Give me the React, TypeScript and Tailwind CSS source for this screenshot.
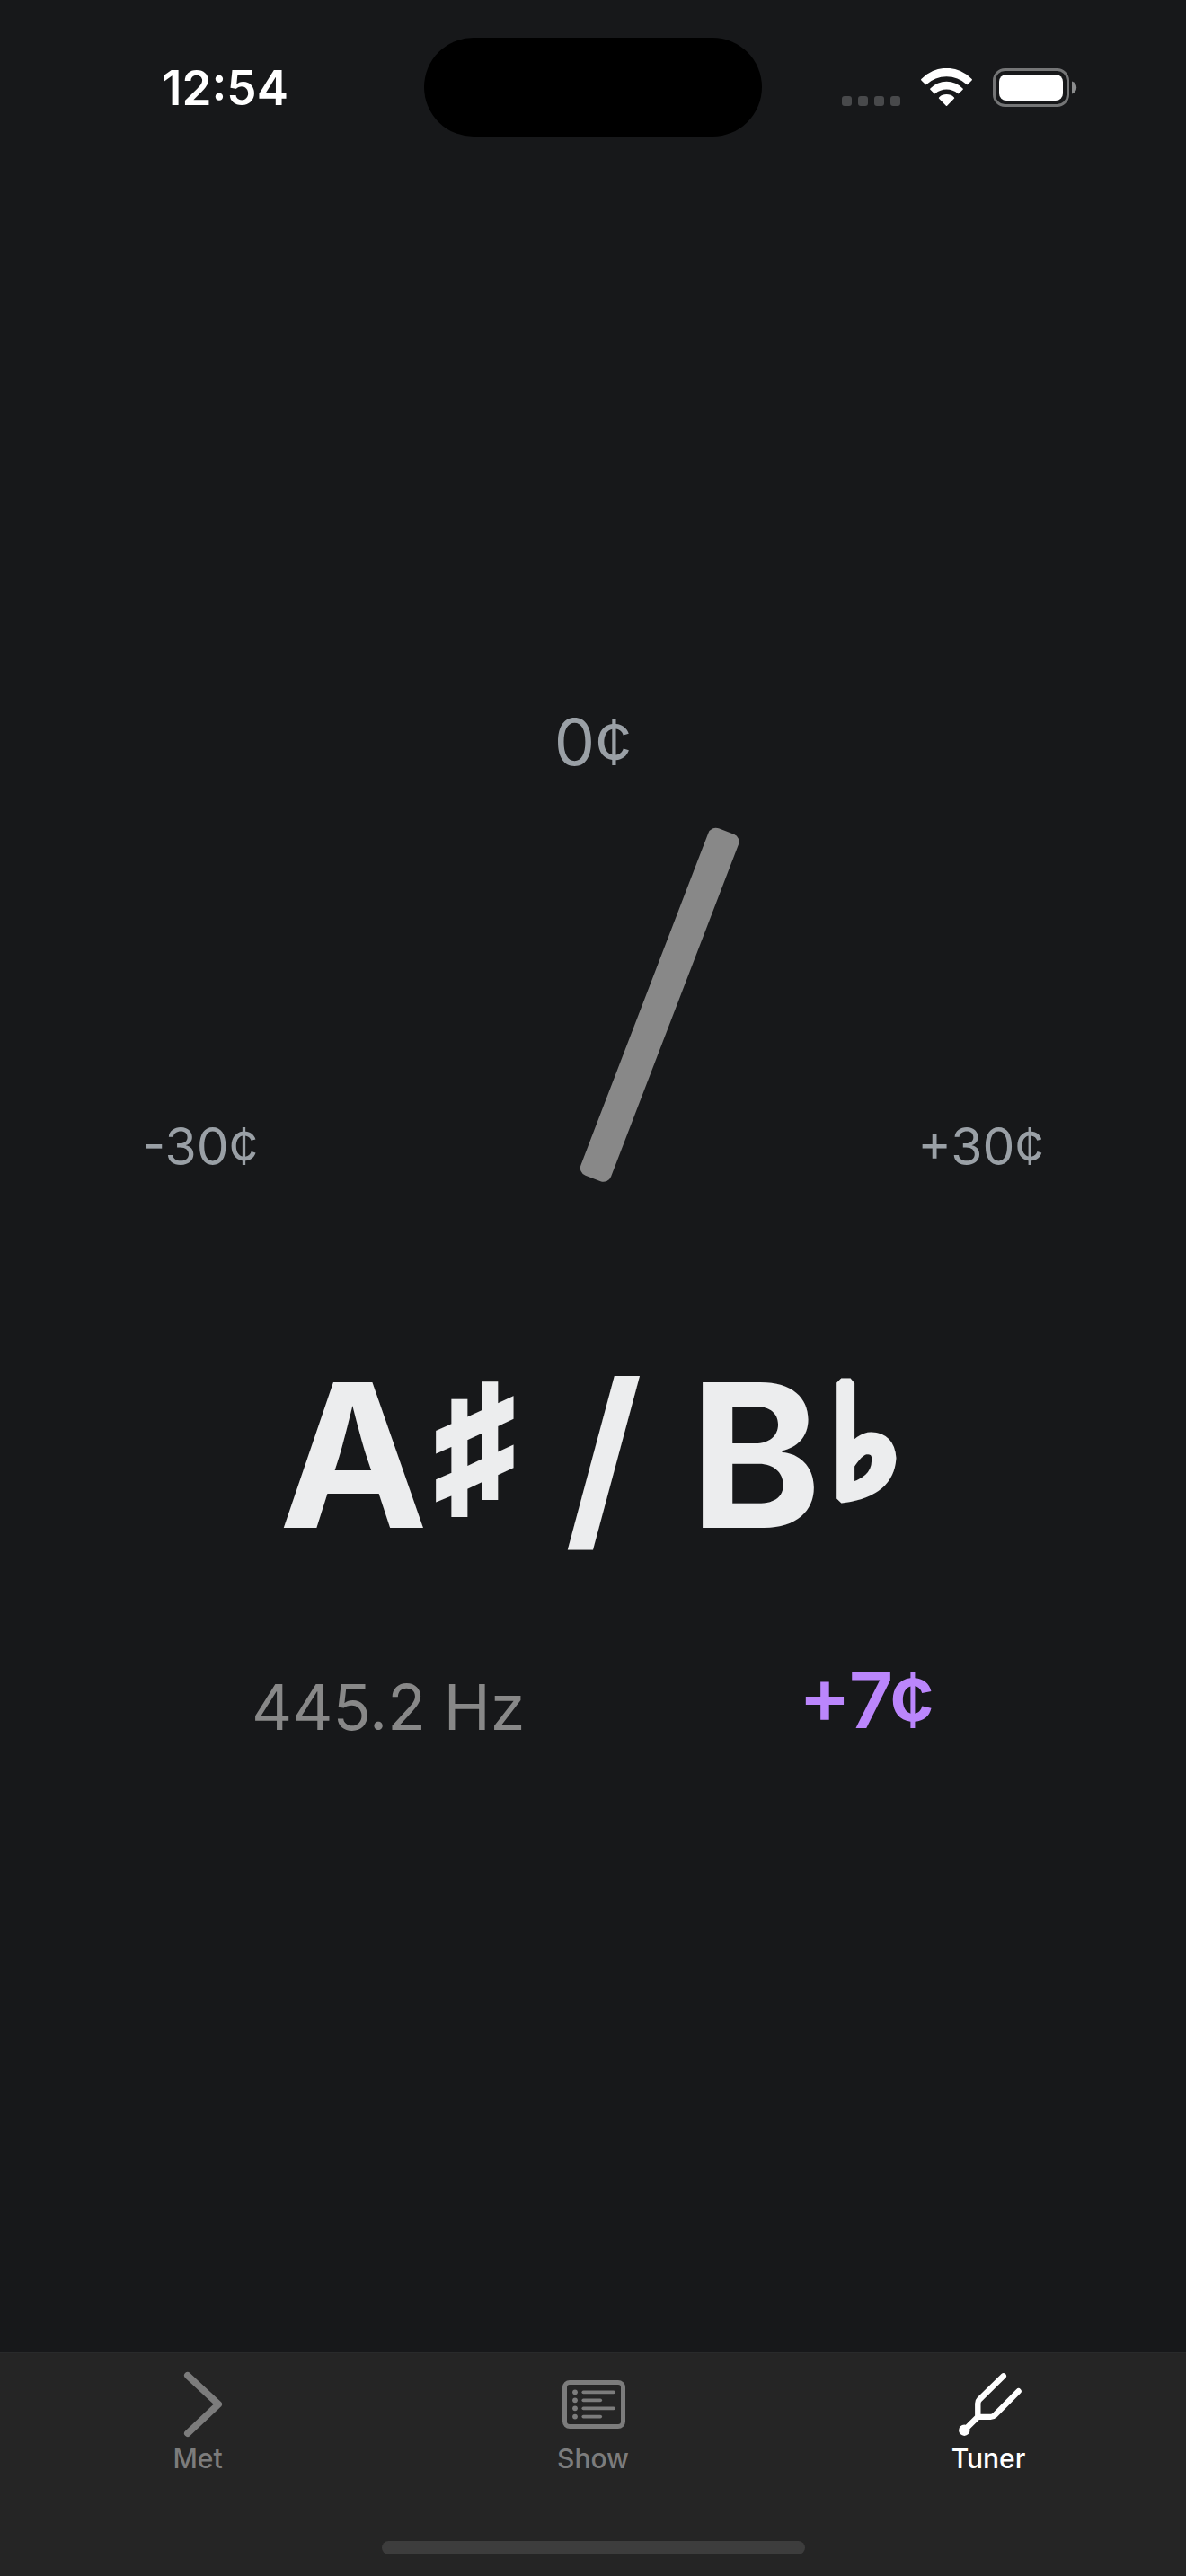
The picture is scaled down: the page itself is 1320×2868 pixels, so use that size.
import React from "react";

const CENTS = 7;

function SignalDots() {
  return (
    <div className="flex gap-[7px] pb-px" aria-label="No signal">
      {[0, 1, 2, 3].map((i) => (
        <span key={i} className="size-[11px] rounded-[3px] bg-[#48494b]" />
      ))}
    </div>
  );
}

function WifiIcon() {
  return (
    <svg width="57" height="43" viewBox="0 0 57 43" fill="#fff" aria-hidden="true">
      <path d="M0.4 12.1A38.3 38.3 0 0 1 56.6 12.1Q57.3 12.8 56.6 13.5L52 18.1Q51.4 18.6 50.8 18A33 33 0 0 0 6.2 18Q5.6 18.6 5 18.1L0.4 13.5Q-0.3 12.8 0.4 12.1Z" />
      <path d="M10.4 22.4A25 25 0 0 1 46.6 22.4Q47.3 23.1 46.6 23.8L42.3 28.1Q41.7 28.7 41 28.1A19.5 19.5 0 0 0 16 28.1Q15.3 28.7 14.7 28.1L10.4 23.8Q9.7 23.1 10.4 22.4Z" />
      <path d="M20.1 32.4A12.4 12.4 0 0 1 36.9 32.4Q37.6 33.1 36.9 33.8L29.1 41.7Q28.5 42.3 27.9 41.7L20.1 33.8Q19.4 33.1 20.1 32.4Z" />
    </svg>
  );
}

function BatteryIcon() {
  return (
    <svg width="94" height="43" viewBox="0 0 94 43" aria-hidden="true">
      <rect x="1.5" y="1.5" width="82" height="40" rx="12" fill="none" stroke="#747576" strokeWidth="3" />
      <rect x="7" y="7" width="71" height="29" rx="8" fill="#fff" />
      <path d="M88 14.5C91 15.5 93.2 18 93.2 21.5S91 27.5 88 28.5Z" fill="#8b8c8d" />
    </svg>
  );
}

function MetIcon() {
  return (
    <svg width="84" height="84" viewBox="0 0 84 84" fill="none" stroke="currentColor" strokeWidth="7.6" strokeLinecap="round" strokeLinejoin="round" aria-hidden="true">
      <path d="M30.8 9.7L65.2 41.8L30.8 74.2" />
    </svg>
  );
}

function ShowIcon() {
  const rows = [28.3, 37.3, 46.3, 55.6];
  return (
    <svg width="84" height="84" viewBox="0 0 84 84" fill="none" stroke="currentColor" strokeLinecap="round" aria-hidden="true">
      <rect x="10.5" y="17.5" width="65" height="49" rx="5.5" strokeWidth="5" />
      {rows.map((y, i) => (
        <g key={y}>
          <circle cx="22" cy={y} r="2.9" fill="currentColor" stroke="none" />
          <path d={i % 2 ? `M31.3 ${y}H50.2` : `M31.3 ${y}H65`} strokeWidth="3.7" />
        </g>
      ))}
    </svg>
  );
}

function TunerIcon() {
  return (
    <svg width="84" height="84" viewBox="0 0 84 84" fill="none" stroke="currentColor" strokeWidth="6.4" strokeLinecap="round" strokeLinejoin="round" aria-hidden="true">
      <circle cx="15.3" cy="70.7" r="6.2" fill="currentColor" stroke="none" />
      <path d="M15.3 70.7L30.3 55.9M58.8 10.3L32.2 36.4Q30.3 38.3 30.3 41V55.9H44.5Q47.2 55.9 49.1 54L75.6 27.2" />
    </svg>
  );
}

function Accidental({ children }: { children: string }) {
  return (
    <span className="mr-[6px] ml-[10px] align-[36px] text-[168px] leading-none [-webkit-text-stroke:10px_#ecedee]">
      {children}
    </span>
  );
}

const tabs = [
  { label: "Met", Icon: MetIcon, active: false },
  { label: "Show", Icon: ShowIcon, active: false },
  { label: "Tuner", Icon: TunerIcon, active: true },
];

export default function App() {
  return (
    <div className="flex min-h-screen flex-col bg-[#17181a] font-[Inter,sans-serif] text-white">
      <header className="grid grid-cols-[1fr_auto_1fr] items-center pt-[42px]">
        <time className="pt-[2px] pl-[180px] text-[53px] leading-none font-semibold">12:54</time>
        <div className="h-[110px] w-[376px] rounded-full bg-black" />
        <div className="flex items-end justify-end gap-[23px] pr-[121px]">
          <SignalDots />
          <WifiIcon />
          <BatteryIcon />
        </div>
      </header>

      <main className="flex grow flex-col justify-center pb-[36px]">
        <section aria-label="Pitch dial" className="flex flex-col gap-[30px] text-[#9aa0a6]">
          <p className="text-center text-[72px] leading-[84px]">0¢</p>
          <div className="grid grid-cols-[1fr_auto_1fr] items-end px-[158px]">
            <span className="text-[57px] leading-[70px]">-30¢</span>
            <div
              className="h-[414px] w-[36px] origin-bottom rounded-[9px] bg-[#888888]"
              style={{ transform: `rotate(${CENTS * 3}deg)` }}
            />
            <span className="text-right text-[57px] leading-[70px]">+30¢</span>
          </div>
        </section>
        <h1 className="mt-[176px] text-center text-[222px] leading-[266px] font-bold text-[#ecedee] [font-feature-settings:'calt'_0]">
          A<Accidental>♯</Accidental> / B<Accidental>♭</Accidental>
        </h1>
        <div className="mt-[96px] flex items-start justify-between px-[280px]">
          <span className="text-[70px] leading-[102px] text-[#888888]">445.2 Hz</span>
          <span className="text-[86px] leading-[86px] font-semibold text-[#bb86fc]">+{CENTS}¢</span>
        </div>
      </main>

      <footer className="bg-[#252525]">
        <nav className="grid grid-cols-3 border-t border-[#292a2b] pt-[15px]">
          {tabs.map(({ label, Icon, active }) => (
            <button
              key={label}
              type="button"
              aria-current={active ? "page" : undefined}
              className={`flex flex-col items-center text-[30px] leading-[36px] font-medium ${active ? "text-white" : "text-[#7c7c7c]"}`}
            >
              <Icon />
              {label}
            </button>
          ))}
        </nav>
        <div className="mx-auto mt-[74px] mb-[24px] h-[15px] w-[471px] rounded-full bg-[#3d3d3d]" />
      </footer>
    </div>
  );
}
